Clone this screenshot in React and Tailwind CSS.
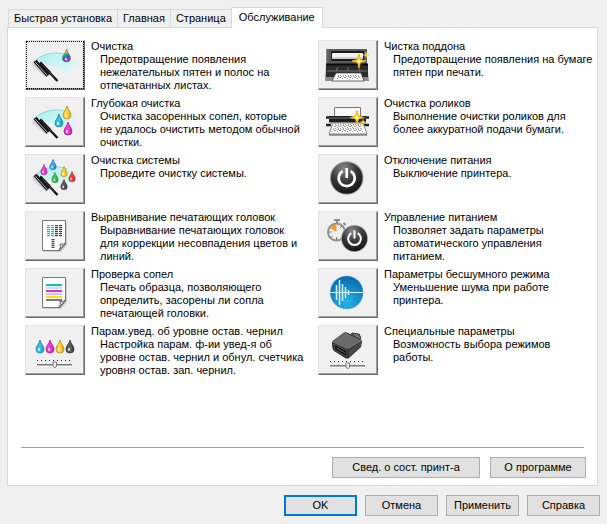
import React, { useState } from 'react';

const tabs = ['Быстрая установка', 'Главная', 'Страница', 'Обслуживание'];

const DROP = 'M0 -7 C0.6 -3.4 4 -1 4 2.2 A4 3.8 0 0 1 -4 2.2 C-4 -1 -0.6 -3.4 0 -7 Z';

const Drop = ({ x, y, color, dark, scale = 1 }) => (
  <g transform={`translate(${x} ${y}) scale(${scale})`}>
    <path d={DROP} fill={color} stroke={dark} strokeWidth="0.7" />
    <path d="M1 -3 C3.6 0 4 3 1.5 5.2 C2.4 2 2 -0.5 1 -3Z" fill={dark} opacity="0.5" />
    <ellipse cx="-1" cy="2.4" rx="1.1" ry="1.7" fill="#fff" opacity="0.75" />
  </g>
);

const Star = ({ x, y, r }) => (
  <g transform={`translate(${x} ${y}) scale(${r})`}>
    <path
      d="M0 -1 L0.2 -0.2 L1 0 L0.2 0.2 L0 1 L-0.2 0.2 L-1 0 L-0.2 -0.2Z"
      fill="#ffe14a"
      stroke="#f0b400"
      strokeWidth="0.14"
    />
    <circle r="0.22" fill="#fffbd0" />
  </g>
);

// Swept area with the wiper blade in front of it
const Wiper = () => (
  <>
    <path d="M11 20 C19 13 33 11 42 15 L52 23 L41 35 C37 28 31 25 23 26 Z" fill="url(#sweep)" />
    <path d="M11 20 C19 13 33 11 42 15" fill="none" stroke="#8fd9d6" strokeWidth="1" />
    <path d="M8 22 L7 26 L20 37 L24 36Z" fill="#bdbdbd" opacity="0.5" />
    <path d="M10 21 L23 35.5" stroke="#111" strokeWidth="4" />
    <path d="M10.2 22 L22.5 35.5" stroke="#b8b8b8" strokeWidth="1" />
    <path d="M15 22.5 L25 33" stroke="#111" strokeWidth="2.8" />
    <path d="M23 31 L32.5 41" stroke="#111" strokeWidth="2.4" />
    <path d="M17 24.5 L29 37.5" stroke="#777" strokeWidth="0.5" />
  </>
);

const Sheet = () => (
  <>
    <path d="M18 11 H42 V34 L36 41 H18Z" fill="#bbb" opacity="0.6" />
    <path d="M17.5 9.5 H40.5 V33 L35 39.5 H17.5Z" fill="#fff" stroke="#777" strokeWidth="1" />
    <path d="M40.5 32 C38 34 36 33 35 33 C36 36 34.5 38 34 39.5Z" fill="#ddd" stroke="#555" strokeWidth="0.9" />
  </>
);

const Slider = ({ y }) => (
  <>
    <path d={`M12 ${y + 0.5} H47`} stroke="#222" strokeWidth="1" strokeDasharray="1 3" />
    <path d={`M12 ${y + 4.5} H47`} stroke="#777" strokeWidth="1" />
    <path d={`M12 ${y + 5.5} H47`} stroke="#bbb" strokeWidth="1" />
    <path d={`M28 ${y + 2} H31.5 V${y + 6} L29.7 ${y + 8} L28 ${y + 6}Z`} fill="#eee" stroke="#666" strokeWidth="0.8" />
  </>
);

const Power = ({ x, y, r }) => (
  <g transform={`translate(${x} ${y}) scale(${r / 16})`}>
    <circle r="16.8" fill="#a4a4a4" />
    <circle r="15.8" fill="url(#ball)" />
    <path d="M-4 -6.8 A8 8 0 1 0 4 -6.8" fill="none" stroke="#fff" strokeWidth="2.6" />
    <path d="M0 -10 V0" stroke="#fff" strokeWidth="2.6" />
  </g>
);

const cyan = { color: '#35bfe0', dark: '#0c6f9c' };
const magenta = { color: '#ee3bd0', dark: '#930a86' };
const yellow = { color: '#ffd23a', dark: '#b07a00' };
const black = { color: '#5c5c5c', dark: '#1c1c1c' };

const icons = {
  clean: (
    <>
      <Wiper />
      <path transform="translate(41.5 16)" d={DROP} fill="url(#rainbow)" stroke="#555" strokeWidth="0.5" />
      <ellipse cx="41" cy="19" rx="1.3" ry="1.5" fill="#fff" opacity="0.7" />
    </>
  ),
  deep: (
    <>
      <Wiper />
      <Drop x={42} y={16} {...yellow} />
      <Drop x={34} y={24} {...cyan} />
      <Drop x={43} y={32} {...magenta} />
    </>
  ),
  system: (
    <>
      <Wiper />
      <Drop x={19} y={16} scale={0.8} {...magenta} />
      <Drop x={28} y={11} scale={0.8} color="#3ca9ee" dark="#0b5ca5" />
      <Drop x={39} y={18} scale={0.8} {...yellow} />
      <Drop x={30} y={24} scale={0.8} color="#3fc35a" dark="#127a2a" />
      <Drop x={47} y={23} scale={0.8} color="#ee4040" dark="#a01010" />
      <Drop x={39} y={31} scale={0.8} {...black} />
    </>
  ),
  align: (
    <>
      <Sheet />
      <path d="M23.5 14 V26 M27.5 14 V26" stroke="#2fb9b9" strokeWidth="3" strokeDasharray="1.2 0.8" />
      <path d="M31.5 14 V26 M35.5 14 V26 M28 28 V37" stroke="#444" strokeWidth="3" strokeDasharray="1.2 0.8" />
    </>
  ),
  nozzle: (
    <>
      <Sheet />
      <path d="M21 17 H37" stroke="#12bcbc" strokeWidth="2" />
      <path d="M21 20 H37" stroke="#a5f2f2" strokeWidth="2" />
      <path d="M21 23 H37" stroke="#f020e0" strokeWidth="2" />
      <path d="M21 26 H37" stroke="#f8b0f0" strokeWidth="2" />
      <path d="M21 29 H37" stroke="#f0e800" strokeWidth="2" />
      <path d="M21 32 H37" stroke="#555" strokeWidth="1.6" />
    </>
  ),
  ink: (
    <>
      <Drop x={15} y={22} {...cyan} />
      <Drop x={25} y={22} {...magenta} />
      <Drop x={35} y={22} {...yellow} />
      <Drop x={45} y={22} {...black} />
      <Slider y={35} />
    </>
  ),
  tray: (
    <>
      <path d="M8 9 H49 V24 L51 41 H7 L8 24Z" fill="#8c8c8c" />
      <path d="M9 9 H49 V24 H9Z" fill="#5c5c5c" />
      <path d="M13 11 H46 V21 H13Z" fill="#1a1a1a" />
      <rect x="14" y="13" width="31" height="6" rx="1" fill="#f4f4f4" />
      <path d="M15 18 H44" stroke="#aaa" strokeWidth="1" />
      <path d="M8 24 H50 V37 H8Z" fill="#2c2c2c" />
      <path d="M8 24.5 H50" stroke="#0c0c0c" strokeWidth="2" />
      <path d="M9 31 H49 M20 27 L18 31 M30 27 V31 M40 27 L42 31" stroke="#808080" strokeWidth="0.9" />
      <path d="M18 33 H43 L46 41 H14Z" fill="#fff" stroke="#444" strokeWidth="0.8" />
      <path d="M20 35 H41 L43 39 H17Z" fill="url(#grain)" />
      <Star x={41} y={21} r={7} />
      <Star x={48} y={15} r={3} />
    </>
  ),
  roller: (
    <>
      <path d="M16.5 10.5 H42.5 V20 H16.5Z" fill="#f8f8f8" stroke="#777" strokeWidth="1" />
      <path d="M8 20.5 H13 M46 20.5 H51 M8 28 H13 M46 28 H51" stroke="#222" strokeWidth="2.6" />
      <path d="M11 19 H48 V25.5 H11Z" fill="#1c1c1c" />
      <path d="M11 21 H48" stroke="#777" strokeWidth="1" />
      <path d="M12 26 H47" stroke="#999" strokeWidth="1.2" />
      <path d="M15 26 H45 L49 37 H11Z" fill="#fff" stroke="#777" strokeWidth="0.9" />
      <path d="M17 27 H43 L46 35 H14Z" fill="url(#grain)" />
      <path d="M11 38 H49" stroke="#555" strokeWidth="1" />
      <Star x={39} y={20.5} r={7} />
      <Star x={45} y={25} r={3} />
    </>
  ),
  powerOff: <Power x={28.7} y={24} r={16} />,
  powerManage: (
    <>
      <path d="M16 9 H22 M19 9 V13 M25.5 12 L27.5 14" stroke="#888" strokeWidth="2" />
      <circle cx="18.5" cy="21" r="8.5" fill="#eee" stroke="#909090" strokeWidth="2" />
      <path d="M18.5 21 V13.5 A7.5 7.5 0 0 0 12 17Z" fill="#f79a2a" />
      <path d="M18.5 26 V29 M11 21 H13.5 M13 26.5 L14.5 25 M24 15 L22 17" stroke="#777" strokeWidth="1" />
      <Power x={36.5} y={27.5} r={12.8} />
    </>
  ),
  quiet: (
    <>
      <circle cx="28.7" cy="24.5" r="16.8" fill="#8fb4cc" />
      <circle cx="28.7" cy="24.5" r="16.2" fill="url(#blueBall)" />
      <path d="M12.5 24.5 H45" stroke="#d8f4ff" strokeWidth="1.1" />
      <path d="M18.5 17 V32 M21.5 12 V37 M24.5 16 V33 M27.5 19 V30 M30.5 22 V27" stroke="#d8f4ff" strokeWidth="1.5" />
    </>
  ),
  special: (
    <>
      <path d="M31 12 L34 8 L41 9 L43 13 L40 17 L33 16Z" fill="#555" stroke="#222" strokeWidth="0.8" />
      <path d="M33 10 L38 15 M36 9 L41 14 M38 9 L42 13" stroke="#aaa" strokeWidth="0.7" />
      <path d="M14 18 Q14 16 16 15 L26 7.5 Q28 7 30 8 L42 14 Q44 15 44 17 L43 22 L31 33 Q29 34 27 33 L16 26 Q14 24 14 18Z" fill="#2c2c2c" />
      <path d="M15 17 L27 8 L43 16 L30 24Z" fill="#6a6a6a" stroke="#8a8a8a" strokeWidth="0.6" />
      <path d="M16 19 L29 26 V32 L17 25Z" fill="#161616" stroke="#777" strokeWidth="0.6" />
      <path d="M31 25 L43 17 V21 L31 32Z" fill="#484848" />
      <path d="M19 23 L27 28" stroke="#777" strokeWidth="0.8" />
      <Slider y={36} />
    </>
  ),
};

const tools = [
  { id: 'clean', title: 'Очистка', text: 'Предотвращение появления\nнежелательных пятен и полос на\nотпечатанных листах.' },
  { id: 'tray', title: 'Чистка поддона', text: 'Предотвращение появления на бумаге\nпятен при печати.' },
  { id: 'deep', title: 'Глубокая очистка', text: 'Очистка засоренных сопел, которые\nне удалось очистить методом обычной\nочистки.' },
  { id: 'roller', title: 'Очистка роликов', text: 'Выполнение очистки роликов для\nболее аккуратной подачи бумаги.' },
  { id: 'system', title: 'Очистка системы', text: 'Проведите очистку системы.' },
  { id: 'powerOff', title: 'Отключение питания', text: 'Выключение принтера.' },
  { id: 'align', title: 'Выравнивание печатающих головок', text: 'Выравнивание печатающих головок\nдля коррекции несовпадения цветов и\nлиний.' },
  { id: 'powerManage', title: 'Управление питанием', text: 'Позволяет задать параметры\nавтоматического управления\nпитанием.' },
  { id: 'nozzle', title: 'Проверка сопел', text: 'Печать образца, позволяющего\nопределить, засорены ли сопла\nпечатающей головки.' },
  { id: 'quiet', title: 'Параметры бесшумного режима', text: 'Уменьшение шума при работе\nпринтера.' },
  { id: 'ink', title: 'Парам.увед. об уровне остав. чернил', text: 'Настройка парам. ф-ии увед-я об\nуровне остав. чернил и обнул. счетчика\nуровня остав. зап. чернил.' },
  { id: 'special', title: 'Специальные параметры', text: 'Возможность выбора режимов\nработы.' },
];

// Shared gradients and patterns for the tool icons
const IconDefs = () => (
  <svg className="absolute h-0 w-0" aria-hidden="true">
    <defs>
      <linearGradient id="sweep" x1="0" y1="0" x2="1" y2="1">
        <stop offset="0" stopColor="#a8efec" />
        <stop offset="0.6" stopColor="#d0f7f7" />
        <stop offset="1" stopColor="#eaf5f5" />
      </linearGradient>
      <linearGradient id="rainbow" x1="0" y1="0" x2="0.4" y2="1">
        <stop offset="0" stopColor="#e83030" />
        <stop offset="0.3" stopColor="#e8c020" />
        <stop offset="0.5" stopColor="#30b860" />
        <stop offset="0.72" stopColor="#3058e0" />
        <stop offset="1" stopColor="#b030c0" />
      </linearGradient>
      <radialGradient id="ball" cx="0.4" cy="0.2" r="0.8">
        <stop offset="0" stopColor="#8a8a8a" />
        <stop offset="0.5" stopColor="#3c3c3c" />
        <stop offset="1" stopColor="#161616" />
      </radialGradient>
      <radialGradient id="blueBall" cx="0.5" cy="0.8" r="0.8">
        <stop offset="0" stopColor="#22b4e8" />
        <stop offset="1" stopColor="#0868b0" />
      </radialGradient>
      <pattern id="grain" width="5" height="4" patternUnits="userSpaceOnUse">
        <path d="M0 0 H1 V1 H0Z M3 0 H4 V1 H3Z M1 1 H3 V2 H1Z M4 2 H5 V3 H4Z M0 3 H1 V4 H0Z M2 3 H3 V4 H2Z" fill="#999" />
      </pattern>
    </defs>
  </svg>
);

const Tool = ({ tool, selected, onSelect }) => (
  <div className="flex min-h-[57px] min-w-0 items-start">
    <button
      id={tool.id}
      aria-labelledby={`${tool.id}-title`}
      onClick={() => onSelect(tool.id)}
      className={`h-[50px] w-[60px] shrink-0 border border-t-[#e3e3e3] border-l-[#e3e3e3] border-r-[#696969] border-b-[#696969] bg-[#f0f0f0] shadow-[inset_-1px_-1px_0_#a0a0a0] ${
        selected ? 'outline-1 -outline-offset-2 outline-dotted outline-black' : 'outline-none'
      }`}
    >
      <svg viewBox="1 1 58 48" className="block h-12 w-[58px]" aria-hidden="true">
        {icons[tool.id]}
      </svg>
    </button>
    <div className="ml-1.5">
      <h3 id={`${tool.id}-title`}>{tool.title}</h3>
      <p className="ml-[9px] whitespace-pre">{tool.text}</p>
    </div>
  </div>
);

const PushButton = ({ children, className }) => (
  <button className={`h-[21px] border bg-[#e1e1e1] ${className}`}>{children}</button>
);

const App = () => {
  const [activeTab, setActiveTab] = useState('Обслуживание');
  const [selected, setSelected] = useState('clean');

  return (
    <div className="flex min-h-screen flex-col bg-[#f0f0f0] px-[7px] pt-[7px] pb-2 font-['Liberation_Sans',Arial,sans-serif] text-[11px] leading-[13px] text-black">
      <IconDefs />
      <div role="tablist" className="flex items-end pl-px">
        {tabs.map((tab) => (
          <button
            key={tab}
            role="tab"
            aria-selected={tab === activeTab}
            onClick={() => setActiveTab(tab)}
            className={
              tab === activeTab
                ? 'relative -mb-px h-[21px] border border-b-0 border-[#d9d9d9] bg-white px-[7px] pb-0.5'
                : 'h-[18px] border border-r-0 border-b-0 border-[#d9d9d9] px-[5px]'
            }
          >
            {tab}
          </button>
        ))}
      </div>

      <main className="mr-0.5 flex flex-1 flex-col border border-[#d9d9d9] bg-white pt-3 pr-[11px] pb-[7px] pl-[17px]">
        <div className="grid grid-cols-[293fr_268fr]">
          {tools.map((tool) => (
            <Tool key={tool.id} tool={tool} selected={tool.id === selected} onSelect={setSelected} />
          ))}
        </div>
        <hr className="mt-auto mr-0.5 -ml-1 border-[#a0a0a0]" />
        <div className="mt-[9px] flex justify-end gap-2.5">
          <PushButton className="w-[148px] border-[#adadad]">Свед. о сост. принт-а</PushButton>
          <PushButton className="w-24 border-[#adadad]">О программе</PushButton>
        </div>
      </main>

      <footer className="mt-[9px] flex justify-end gap-2">
        <PushButton className="w-[73px] border-2 border-[#0078d7]">OK</PushButton>
        <PushButton className="w-[73px] border-[#adadad]">Отмена</PushButton>
        <PushButton className="w-[73px] border-[#adadad]">Применить</PushButton>
        <PushButton className="w-[73px] border-[#adadad]">Справка</PushButton>
      </footer>
    </div>
  );
};

export default App;
